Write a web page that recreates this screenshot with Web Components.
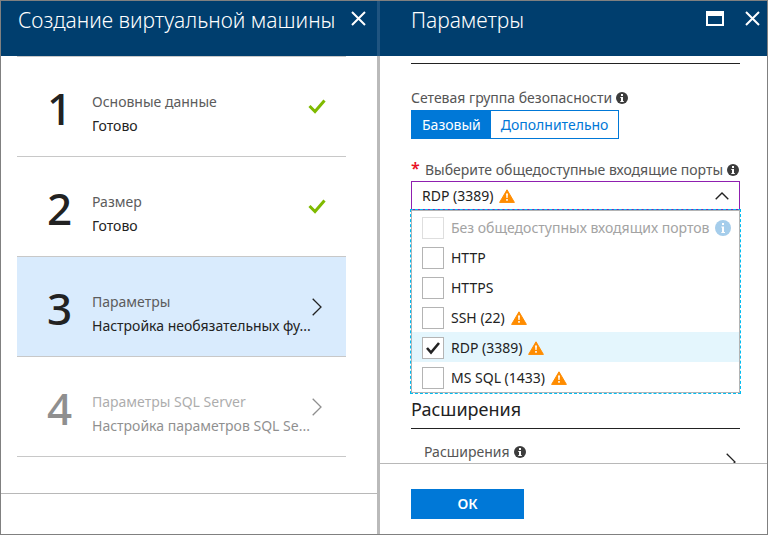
<!DOCTYPE html>
<html lang="ru">
<head>
<meta charset="utf-8">
<title>Создание виртуальной машины</title>
<style>
  html, body { height: 100%; }
  body {
    margin: 0;
    font-family: "Noto Sans", "Open Sans", sans-serif;
    font-size: 14px;
    line-height: 20px;
    color: #222;
    background: #fff;
  }
</style>
</head>
<body>
<portal-shell>
  <portal-blade heading="Создание виртуальной машины">
    <wizard-steps>
      <wizard-step number="1" heading="Основные данные" state="done">Готово</wizard-step>
      <wizard-step number="2" heading="Размер" state="done">Готово</wizard-step>
      <wizard-step number="3" heading="Параметры" state="current">Настройка необязательных фу...</wizard-step>
      <wizard-step number="4" heading="Параметры SQL Server" state="pending">Настройка параметров SQL Se...</wizard-step>
    </wizard-steps>
  </portal-blade>
  <blade-divider></blade-divider>
  <portal-blade heading="Параметры" maximizable>
    <settings-form></settings-form>
    <ok-button slot="footer">ОК</ok-button>
  </portal-blade>
</portal-shell>

<script>
const define = (name, html, setup) => {
  const template = document.createElement('template');
  template.innerHTML = html;
  customElements.define(name, class extends HTMLElement {
    constructor() {
      super();
      this.attachShadow({ mode: 'open' }).append(template.content.cloneNode(true));
    }
    connectedCallback() {
      if (setup) setup(this, this.shadowRoot);
    }
  });
};

const ICONS = {
  close: [15, 15, '<path d="M1 1L14 14M14 1L1 14" fill="none" stroke="currentColor" stroke-width="2"/>'],
  maximize: [18, 15, '<path fill="currentColor" fill-rule="evenodd" d="M0 0H18V15H0ZM2 5V13H16V5Z"/>'],
  tick: [18, 15, '<path d="M1.500 7L7 12.500L16.500 1.500" fill="none" stroke="#7fba00" stroke-width="3"/>'],
  chevron: [10, 18, '<path d="M.7 .7L9 9L.7 17.300" fill="none" stroke="currentColor" stroke-width="1.300"/>'],
  up: [14, 8, '<path d="M.7 7.300L7 1L13.300 7.300" fill="none" stroke="currentColor" stroke-width="1.400"/>'],
  info: [12, 12, '<circle cx="6" cy="6" r="6" fill="currentColor"/><path fill="#fff" d="M5 2H7V4H5ZM4.300 5H7V9H7.800V10H4.300V9H5V6H4.300Z"/>'],
  infolarge: [16, 16, '<circle cx="8" cy="8" r="8" fill="#a5cdeb"/><path fill="#fff" d="M7 3H9V5H7ZM6.300 6.500H9V12H10V13H6.300V12H7V7.500H6.300Z"/>'],
  warning: [16, 14, '<path fill="#ff8c00" stroke="#ff8c00" stroke-linejoin="round" d="M8 .8L15.400 13.400H.6Z"/><path fill="#fff" d="M7 4.500H9L8.600 9H7.400ZM7.200 10H8.800V11.800H7.200Z"/>']
};

define('ui-icon', `<style>:host { display: inline-flex; flex: none; } svg { display: block; }</style>`, (el, root) => {
  if (root.querySelector('svg')) return;
  const [w, h, body] = ICONS[el.getAttribute('name')];
  root.innerHTML += `<svg width="${w}" height="${h}" viewBox="0 0 ${w} ${h}" aria-hidden="true">${body}</svg>`;
});

define('portal-shell', `
  <style>
    :host {
      display: grid;
      grid-template-columns: 376fr 3px 387fr;
      box-sizing: border-box;
      height: 100vh;
      border: 1px solid #808080;
    }
  </style>
  <slot></slot>`);

define('blade-divider', `
  <style>
    :host { display: flex; flex-direction: column; background: #bababa; }
    div { height: 55px; background: #1f5480; }
  </style>
  <div></div>`);

define('portal-blade', `
  <style>
    :host { display: flex; flex-direction: column; min-width: 0; min-height: 0; }
    header {
      display: flex;
      align-items: flex-start;
      box-sizing: border-box;
      height: 55px;
      flex: none;
      padding: 3px 11px 0 17px;
      color: #fff;
      background: #003e6e;
    }
    :host([maximizable]) header { padding: 3px 7px 0 31px; }
    h2 {
      flex: 1;
      margin: 0;
      font-size: 21px;
      line-height: 32px;
      font-weight: 300;
      white-space: nowrap;
    }
    button {
      display: flex;
      align-items: center;
      height: 28px;
      padding: 0;
      border: 0;
      color: inherit;
      background: none;
    }
    .max { margin-right: 21px; }
    :host(:not([maximizable])) .max { display: none; }
    main { flex: 1; min-height: 0; overflow: hidden; }
    footer {
      box-sizing: border-box;
      flex: none;
      min-height: 41px;
      border-top: 1px solid #b8b8b8;
    }
    :host([maximizable]) footer { padding: 25px 31px 15px; }
  </style>
  <header>
    <h2></h2>
    <button class="max" type="button" aria-label="Развернуть"><ui-icon name="maximize"></ui-icon></button>
    <button type="button" aria-label="Закрыть"><ui-icon name="close"></ui-icon></button>
  </header>
  <main><slot></slot></main>
  <footer><slot name="footer"></slot></footer>`,
  (el, root) => { root.querySelector('h2').textContent = el.getAttribute('heading'); });

define('wizard-steps', `
  <style>:host { display: block; margin: 0 31px 0 16px; border-top: 1px solid #c8c8c8; }</style>
  <slot></slot>`);

define('wizard-step', `
  <style>
    :host { display: block; border-bottom: 1px solid #c8c8c8; }
    :host([state="current"]) { background: #d9ebfd; }
    button {
      display: flex;
      align-items: center;
      width: 100%;
      height: 99px;
      padding: 0 20px 0 30px;
      border: 0;
      font: inherit;
      color: #222;
      text-align: left;
      background: none;
    }
    :host([state="pending"]) button { opacity: .5; }
    .number { width: 45px; flex: none; padding-top: 2px; font-size: 44px; line-height: 48px; font-weight: 500; }
    .text { flex: 1; padding-top: 14px; line-height: 24px; white-space: nowrap; }
    .text span { display: block; }
    .title { color: #5c5c5c; }
    .icon { display: flex; justify-content: center; width: 18px; margin-left: -18px; }
  </style>
  <button type="button">
    <span class="number"></span>
    <span class="text"><span class="title"></span><span><slot></slot></span></span>
    <span class="icon"></span>
  </button>`,
  (el, root) => {
    root.querySelector('.number').textContent = el.getAttribute('number');
    root.querySelector('.title').textContent = el.getAttribute('heading');
    const icon = el.getAttribute('state') === 'done' ? 'tick' : 'chevron';
    root.querySelector('.icon').innerHTML = `<ui-icon name="${icon}"></ui-icon>`;
  });

define('ok-button', `
  <style>
    :host { display: block; }
    button {
      display: block;
      width: 113px;
      height: 30px;
      padding: 0;
      border: 0;
      font: inherit;
      font-weight: 600;
      color: #fff;
      background: #0078d7;
    }
  </style>
  <button type="button"><slot></slot></button>`);

define('toggle-group', `
  <style>
    :host { display: flex; }
    div { display: flex; border: 1px solid #0078d7; }
    button {
      height: 27px;
      padding: 0 10px;
      border: 0;
      font: inherit;
      color: #0078d7;
      background: #fff;
    }
    button[aria-pressed="true"] { color: #fff; background: #0078d7; }
  </style>
  <div role="group" aria-label="Сетевая группа безопасности">
    <button type="button" aria-pressed="true">Базовый</button>
    <button type="button" aria-pressed="false">Дополнительно</button>
  </div>`);

define('port-option', `
  <style>
    :host { display: block; }
    :host([checked]) { background: #e4f6fd; }
    label {
      display: flex;
      align-items: center;
      box-sizing: border-box;
      height: 30px;
      padding: 2px 0 0 10px;
      white-space: nowrap;
    }
    input {
      appearance: none;
      flex: none;
      width: 22px;
      height: 22px;
      margin: 0 7px 0 0;
      border: 1px solid #b4b4b4;
      background: #fff;
    }
    input:checked {
      background: #fff url('data:image/svg+xml,<svg xmlns="http://www.w3.org/2000/svg" width="20" height="20"><path d="M4 10L8 14.500L16 5" fill="none" stroke="%23222" stroke-width="2.600"/></svg>') center no-repeat;
    }
    ui-icon { margin-left: 6px; }
    :host([disabled]) { color: #a3a3a3; }
    :host([disabled]) input { border-color: #dedede; }
  </style>
  <label><input type="checkbox"><slot></slot></label>`,
  (el, root) => {
    const input = root.querySelector('input');
    input.checked = el.hasAttribute('checked');
    input.disabled = el.hasAttribute('disabled');
    input.addEventListener('change', () => el.toggleAttribute('checked', input.checked));
    const icon = el.getAttribute('icon');
    if (icon && !root.querySelector('ui-icon')) {
      root.querySelector('label').insertAdjacentHTML('beforeend', `<ui-icon name="${icon}"></ui-icon>`);
    }
  });

define('port-picker', `
  <style>
    :host { display: block; }
    .trigger {
      display: flex;
      align-items: center;
      box-sizing: border-box;
      width: 100%;
      height: 29px;
      padding: 0 10px;
      border: 1px solid #8f1fb0;
      font: inherit;
      color: #222;
      background: #fff;
    }
    .trigger .warn { margin-left: 6px; }
    .trigger .arrow { margin-left: auto; }
    .list {
      padding-top: 1px;
      border: 1px solid #b4b4b4;
      outline: 1px dashed #00bcf2;
      background: #fff;
    }
  </style>
  <button class="trigger" type="button" aria-labelledby="name" aria-haspopup="true" aria-expanded="true">
    <span id="name">RDP (3389)</span>
    <ui-icon class="warn" name="warning"></ui-icon>
    <ui-icon class="arrow" name="up"></ui-icon>
  </button>
  <div class="list" role="group" aria-label="Порты">
    <port-option disabled icon="infolarge">Без общедоступных входящих портов</port-option>
    <port-option>HTTP</port-option>
    <port-option>HTTPS</port-option>
    <port-option icon="warning">SSH (22)</port-option>
    <port-option checked icon="warning">RDP (3389)</port-option>
    <port-option icon="warning">MS SQL (1433)</port-option>
  </div>`);

define('settings-form', `
  <style>
    :host { display: block; padding: 7px 27px 0 31px; }
    .label { display: flex; align-items: center; color: #555; white-space: nowrap; }
    .label ui-icon { margin-left: 4px; color: #3c3c3c; }
    .group { padding: 24px 0 2px; border-top: 1px solid #222; }
    .ports { padding: 21px 0 1px; }
    .required { width: 14px; align-self: flex-start; font-size: 16px; line-height: 16px; font-weight: 600; color: #e81123; }
    h3 {
      margin: 0;
      padding: 4px 0 7px;
      border-bottom: 1px solid #222;
      font-size: 18px;
      line-height: 24px;
      font-weight: 400;
    }
    .extensions {
      display: flex;
      align-items: flex-start;
      justify-content: space-between;
      width: 100%;
      padding: 13px 4px 14px 13px;
      border: 0;
      font: inherit;
      color: #222;
      background: none;
    }
    .extensions > ui-icon { margin-top: 11px; }
  </style>
  <div class="label group">Сетевая группа безопасности<ui-icon name="info"></ui-icon></div>
  <toggle-group></toggle-group>
  <div class="label ports"><span class="required">*</span>Выберите общедоступные входящие порты<ui-icon name="info"></ui-icon></div>
  <port-picker></port-picker>
  <h3>Расширения</h3>
  <button class="extensions" type="button">
    <span class="label">Расширения<ui-icon name="info"></ui-icon></span>
    <ui-icon name="chevron"></ui-icon>
  </button>`);
</script>
</body>
</html>
